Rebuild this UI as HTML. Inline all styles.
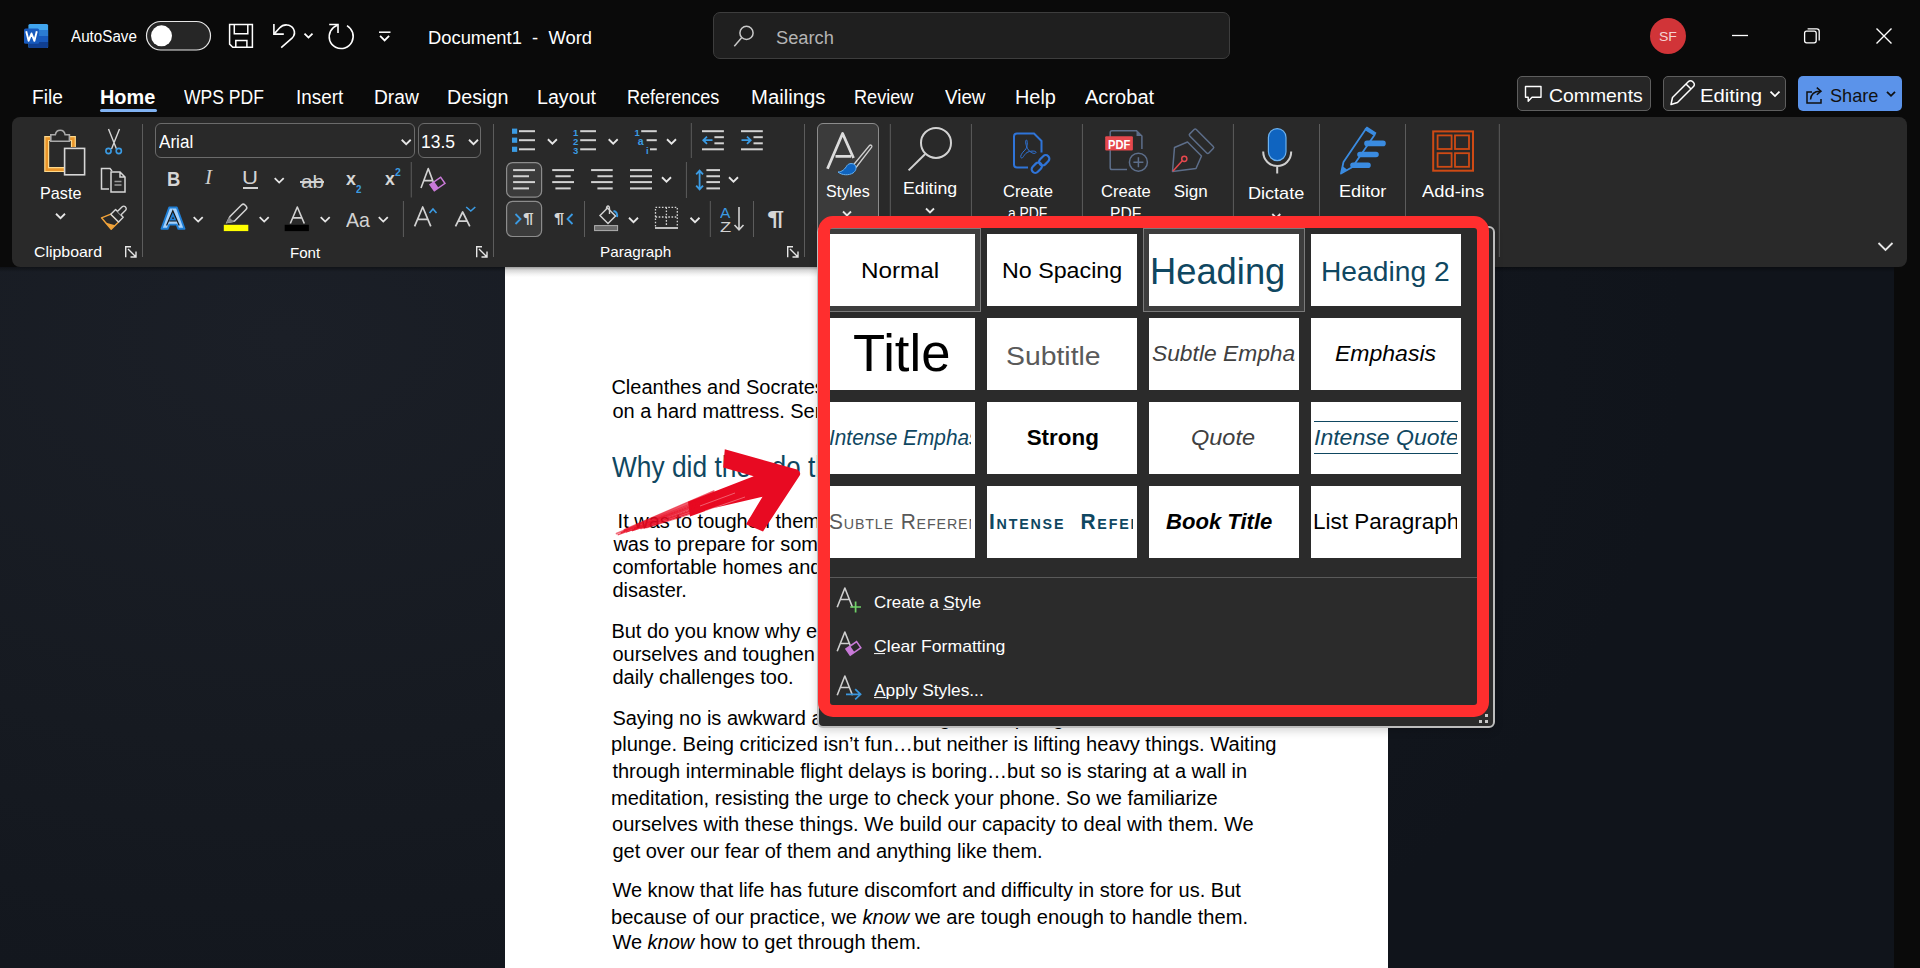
<!DOCTYPE html>
<html><head><meta charset="utf-8"><style>
html,body{margin:0;padding:0;width:1920px;height:968px;overflow:hidden;background:#0a0a0a;font-family:'Liberation Sans', sans-serif;}
#root{position:relative;width:1920px;height:968px;overflow:hidden;}
</style></head><body><div id="root">
<div style="position:absolute;left:0px;top:267px;width:1894px;height:701px;background:radial-gradient(ellipse 1400px 900px at 15% 10%, #1b1f27 0%, #161a21 45%, #10141b 100%);"></div>
<div style="position:absolute;left:12px;top:117px;width:1895px;height:150px;background:#292929;border-radius:8px;"></div>
<div style="position:absolute;left:0px;top:267px;width:1894px;height:5px;background:linear-gradient(rgba(0,0,0,.38),rgba(0,0,0,0));"></div>
<div style="position:absolute;left:505px;top:267px;width:883px;height:701px;background:#fff;"></div>
<div style="position:absolute;left:505px;top:267px;width:883px;height:10px;background:linear-gradient(#9c9c9c,#d6d6d6 30%,#f2f2f2 70%,#fff);"></div>
<div style="position:absolute;left:71.00px;top:28.90px;font:normal 400 16px/16px 'Liberation Sans', sans-serif;color:#fff;white-space:pre;transform:scaleX(0.9499);transform-origin:0 0;">AutoSave</div>
<div style="position:absolute;left:180.50px;top:28.90px;font:normal 400 16px/16px 'Liberation Sans', sans-serif;color:#fff;white-space:pre;transform:scaleX(0.9490);transform-origin:0 0;">Off</div>
<div style="position:absolute;left:427.68px;top:28.50px;font:normal 400 18px/18px 'Liberation Sans', sans-serif;color:#fff;white-space:pre;transform:scaleX(1.0201);transform-origin:0 0;">Document1  -  Word</div>
<div style="position:absolute;left:713px;top:12px;width:517px;height:47px;background:#1f1f1f;border:1px solid #3d3d3d;border-radius:7px;box-sizing:border-box;"></div>
<div style="position:absolute;left:775.50px;top:29.20px;font:normal 400 18px/18px 'Liberation Sans', sans-serif;color:#b4b4b4;white-space:pre;transform:scaleX(1.0157);transform-origin:0 0;">Search</div>
<div style="position:absolute;left:1650px;top:18px;width:36px;height:36px;background:#d13438;border-radius:50%;"></div>
<div style="position:absolute;left:1659.00px;top:30.45px;font:normal 400 13px/13px 'Liberation Sans', sans-serif;color:#f6d3d3;white-space:pre;transform:scaleX(1.0797);transform-origin:0 0;">SF</div>
<div style="position:absolute;left:32.02px;top:87.52px;font:normal 400 19.5px/19.5px 'Liberation Sans', sans-serif;color:#ffffff;white-space:pre;transform:scaleX(0.9805);transform-origin:0 0;">File</div>
<div style="position:absolute;left:99.58px;top:87.52px;font:normal 700 19.5px/19.5px 'Liberation Sans', sans-serif;color:#ffffff;white-space:pre;transform:scaleX(1.0200);transform-origin:0 0;">Home</div>
<div style="position:absolute;left:184.00px;top:87.52px;font:normal 400 19.5px/19.5px 'Liberation Sans', sans-serif;color:#ffffff;white-space:pre;transform:scaleX(0.8996);transform-origin:0 0;">WPS PDF</div>
<div style="position:absolute;left:295.63px;top:87.52px;font:normal 400 19.5px/19.5px 'Liberation Sans', sans-serif;color:#ffffff;white-space:pre;transform:scaleX(0.9679);transform-origin:0 0;">Insert</div>
<div style="position:absolute;left:373.72px;top:87.52px;font:normal 400 19.5px/19.5px 'Liberation Sans', sans-serif;color:#ffffff;white-space:pre;transform:scaleX(0.9841);transform-origin:0 0;">Draw</div>
<div style="position:absolute;left:446.99px;top:87.52px;font:normal 400 19.5px/19.5px 'Liberation Sans', sans-serif;color:#ffffff;white-space:pre;transform:scaleX(1.0110);transform-origin:0 0;">Design</div>
<div style="position:absolute;left:536.99px;top:87.52px;font:normal 400 19.5px/19.5px 'Liberation Sans', sans-serif;color:#ffffff;white-space:pre;transform:scaleX(1.0081);transform-origin:0 0;">Layout</div>
<div style="position:absolute;left:627.07px;top:87.52px;font:normal 400 19.5px/19.5px 'Liberation Sans', sans-serif;color:#ffffff;white-space:pre;transform:scaleX(0.9266);transform-origin:0 0;">References</div>
<div style="position:absolute;left:750.96px;top:87.52px;font:normal 400 19.5px/19.5px 'Liberation Sans', sans-serif;color:#ffffff;white-space:pre;transform:scaleX(1.0399);transform-origin:0 0;">Mailings</div>
<div style="position:absolute;left:854.37px;top:87.52px;font:normal 400 19.5px/19.5px 'Liberation Sans', sans-serif;color:#ffffff;white-space:pre;transform:scaleX(0.9302);transform-origin:0 0;">Review</div>
<div style="position:absolute;left:944.70px;top:87.52px;font:normal 400 19.5px/19.5px 'Liberation Sans', sans-serif;color:#ffffff;white-space:pre;transform:scaleX(0.9642);transform-origin:0 0;">View</div>
<div style="position:absolute;left:1014.98px;top:87.52px;font:normal 400 19.5px/19.5px 'Liberation Sans', sans-serif;color:#ffffff;white-space:pre;transform:scaleX(1.0189);transform-origin:0 0;">Help</div>
<div style="position:absolute;left:1085.00px;top:87.52px;font:normal 400 19.5px/19.5px 'Liberation Sans', sans-serif;color:#ffffff;white-space:pre;transform:scaleX(1.0283);transform-origin:0 0;">Acrobat</div>
<div style="position:absolute;left:100px;top:109px;width:57px;height:3px;background:#80b2f2;border-radius:2px;"></div>
<div style="position:absolute;left:1517px;top:76px;width:134px;height:35px;background:#262626;border:1px solid #5e5e5e;border-radius:5px;box-sizing:border-box;"></div>
<div style="position:absolute;left:1548.50px;top:85.60px;font:normal 400 19px/19px 'Liberation Sans', sans-serif;color:#fff;white-space:pre;transform:scaleX(1.0202);transform-origin:0 0;">Comments</div>
<div style="position:absolute;left:1663px;top:76px;width:123px;height:35px;background:#262626;border:1px solid #5e5e5e;border-radius:5px;box-sizing:border-box;"></div>
<div style="position:absolute;left:1699.53px;top:85.60px;font:normal 400 19px/19px 'Liberation Sans', sans-serif;color:#fff;white-space:pre;transform:scaleX(1.0685);transform-origin:0 0;">Editing</div>
<div style="position:absolute;left:1798px;top:76px;width:104px;height:35px;background:#5b93ea;border-radius:5px;"></div>
<div style="position:absolute;left:1829.80px;top:85.60px;font:normal 400 19px/19px 'Liberation Sans', sans-serif;color:#111;white-space:pre;transform:scaleX(0.9554);transform-origin:0 0;">Share</div>
<div style="position:absolute;left:817px;top:123px;width:62px;height:112px;background:#3b3b3b;border:1.2px solid #8c8c8c;border-radius:6px;box-sizing:border-box;"></div>
<div style="position:absolute;left:40.05px;top:184.65px;font:normal 400 17px/17px 'Liberation Sans', sans-serif;color:#fff;white-space:pre;transform:scaleX(0.9520);transform-origin:0 0;">Paste</div>
<div style="position:absolute;left:34.00px;top:244.35px;font:normal 400 15px/15px 'Liberation Sans', sans-serif;color:#fff;white-space:pre;transform:scaleX(1.0585);transform-origin:0 0;">Clipboard</div>
<div style="position:absolute;left:289.99px;top:244.65px;font:normal 400 15px/15px 'Liberation Sans', sans-serif;color:#fff;white-space:pre;transform:scaleX(1.0051);transform-origin:0 0;">Font</div>
<div style="position:absolute;left:600.38px;top:244.35px;font:normal 400 15px/15px 'Liberation Sans', sans-serif;color:#fff;white-space:pre;transform:scaleX(1.0174);transform-origin:0 0;">Paragraph</div>
<div style="position:absolute;left:825.75px;top:182.80px;font:normal 400 17px/17px 'Liberation Sans', sans-serif;color:#fff;white-space:pre;transform:scaleX(0.9445);transform-origin:0 0;">Styles</div>
<div style="position:absolute;left:902.96px;top:179.85px;font:normal 400 17px/17px 'Liberation Sans', sans-serif;color:#fff;white-space:pre;transform:scaleX(1.0411);transform-origin:0 0;">Editing</div>
<div style="position:absolute;left:1002.50px;top:182.80px;font:normal 400 17px/17px 'Liberation Sans', sans-serif;color:#fff;white-space:pre;transform:scaleX(0.9788);transform-origin:0 0;">Create</div>
<div style="position:absolute;left:1008.00px;top:205.05px;font:normal 400 17px/17px 'Liberation Sans', sans-serif;color:#fff;white-space:pre;transform:scaleX(0.8160);transform-origin:0 0;">a PDF</div>
<div style="position:absolute;left:1101.40px;top:183.05px;font:normal 400 17px/17px 'Liberation Sans', sans-serif;color:#fff;white-space:pre;transform:scaleX(0.9769);transform-origin:0 0;">Create</div>
<div style="position:absolute;left:1110.08px;top:205.05px;font:normal 400 17px/17px 'Liberation Sans', sans-serif;color:#fff;white-space:pre;transform:scaleX(0.9198);transform-origin:0 0;">PDF</div>
<div style="position:absolute;left:1173.75px;top:183.05px;font:normal 400 17px/17px 'Liberation Sans', sans-serif;color:#fff;white-space:pre;">Sign</div>
<div style="position:absolute;left:1248.44px;top:185.05px;font:normal 400 17px/17px 'Liberation Sans', sans-serif;color:#fff;white-space:pre;transform:scaleX(1.0631);transform-origin:0 0;">Dictate</div>
<div style="position:absolute;left:1338.93px;top:182.80px;font:normal 400 17px/17px 'Liberation Sans', sans-serif;color:#fff;white-space:pre;transform:scaleX(1.0652);transform-origin:0 0;">Editor</div>
<div style="position:absolute;left:1421.60px;top:182.80px;font:normal 400 17px/17px 'Liberation Sans', sans-serif;color:#fff;white-space:pre;transform:scaleX(1.0789);transform-origin:0 0;">Add-ins</div>
<div style="position:absolute;left:155px;top:123px;width:260px;height:35px;border:1px solid #6b6b6b;border-radius:6px;box-sizing:border-box;"></div>
<div style="position:absolute;left:158.75px;top:133.20px;font:normal 400 18px/18px 'Liberation Sans', sans-serif;color:#fff;white-space:pre;transform:scaleX(0.9497);transform-origin:0 0;">Arial</div>
<div style="position:absolute;left:418px;top:123px;width:63px;height:35px;border:1px solid #6b6b6b;border-radius:6px;box-sizing:border-box;"></div>
<div style="position:absolute;left:421.03px;top:133.20px;font:normal 400 18px/18px 'Liberation Sans', sans-serif;color:#fff;white-space:pre;transform:scaleX(0.9699);transform-origin:0 0;">13.5</div>
<div style="position:absolute;left:611.40px;top:377.10px;font:normal 400 20px/20px 'Liberation Sans', sans-serif;color:#000;white-space:pre;">Cleanthes and Socrates slept on the floor. Seneca slept</div>
<div style="position:absolute;left:612.40px;top:401.00px;font:normal 400 20px/20px 'Liberation Sans', sans-serif;color:#000;white-space:pre;">on a hard mattress. Seneca fasted.</div>
<div style="position:absolute;left:611.80px;top:452.62px;font:normal 400 28.8px/28.8px 'Liberation Sans', sans-serif;color:#0f4761;white-space:pre;transform:scaleX(0.9140);transform-origin:0 0;">Why did they do this?</div>
<div style="position:absolute;left:617.60px;top:511.00px;font:normal 400 20px/20px 'Liberation Sans', sans-serif;color:#000;white-space:pre;">It was to toughen them up. The point of these practices</div>
<div style="position:absolute;left:613.40px;top:534.00px;font:normal 400 20px/20px 'Liberation Sans', sans-serif;color:#000;white-space:pre;">was to prepare for some future misfortune, to leave</div>
<div style="position:absolute;left:612.40px;top:556.80px;font:normal 400 20px/20px 'Liberation Sans', sans-serif;color:#000;white-space:pre;">comfortable homes and prepare for some future</div>
<div style="position:absolute;left:612.40px;top:579.80px;font:normal 400 20px/20px 'Liberation Sans', sans-serif;color:#000;white-space:pre;">disaster.</div>
<div style="position:absolute;left:611.40px;top:621.20px;font:normal 400 20px/20px 'Liberation Sans', sans-serif;color:#000;white-space:pre;">But do you know why else? Because it builds up</div>
<div style="position:absolute;left:612.40px;top:643.80px;font:normal 400 20px/20px 'Liberation Sans', sans-serif;color:#000;white-space:pre;">ourselves and toughen up for the minor bumps of</div>
<div style="position:absolute;left:612.40px;top:666.70px;font:normal 400 20px/20px 'Liberation Sans', sans-serif;color:#000;white-space:pre;">daily challenges too.</div>
<div style="position:absolute;left:612.40px;top:708.20px;font:normal 400 20px/20px 'Liberation Sans', sans-serif;color:#000;white-space:pre;">Saying no is awkward and so is taking a cold plunge or a</div>
<div style="position:absolute;left:611.39px;top:734.40px;font:normal 400 20px/20px 'Liberation Sans', sans-serif;color:#000;white-space:pre;transform:scaleX(1.0056);transform-origin:0 0;">plunge. Being criticized isn’t fun…but neither is lifting heavy things. Waiting</div>
<div style="position:absolute;left:612.40px;top:760.70px;font:normal 400 20px/20px 'Liberation Sans', sans-serif;color:#000;white-space:pre;">through interminable flight delays is boring…but so is staring at a wall in</div>
<div style="position:absolute;left:611.40px;top:787.80px;font:normal 400 20px/20px 'Liberation Sans', sans-serif;color:#000;white-space:pre;transform:scaleX(1.0033);transform-origin:0 0;">meditation, resisting the urge to check your phone. So we familiarize</div>
<div style="position:absolute;left:612.40px;top:814.30px;font:normal 400 20px/20px 'Liberation Sans', sans-serif;color:#000;white-space:pre;transform:scaleX(1.0034);transform-origin:0 0;">ourselves with these things. We build our capacity to deal with them. We</div>
<div style="position:absolute;left:612.40px;top:840.90px;font:normal 400 20px/20px 'Liberation Sans', sans-serif;color:#000;white-space:pre;">get over our fear of them and anything like them.</div>
<div style="position:absolute;left:612.40px;top:879.50px;font:normal 400 20px/20px 'Liberation Sans', sans-serif;color:#000;white-space:pre;">We know that life has future discomfort and difficulty in store for us. But</div>
<div style="position:absolute;left:611.39px;top:906.50px;font:normal 400 20px/20px 'Liberation Sans', sans-serif;color:#000;white-space:pre;transform:scaleX(1.0051);transform-origin:0 0;">because of our practice, we <i>know</i> we are tough enough to handle them.</div>
<div style="position:absolute;left:612.40px;top:932.30px;font:normal 400 20px/20px 'Liberation Sans', sans-serif;color:#000;white-space:pre;">We <i>know</i> how to get through them.</div>
<svg style="position:absolute;left:0;top:0" width="1920" height="968" viewBox="0 0 1920 968" fill="none"><rect x="28.4" y="24" width="19.7" height="24" rx="1.5" fill="#41a5ee"/><rect x="28.4" y="30" width="19.7" height="6" fill="#2b7cd3"/><rect x="28.4" y="36" width="19.7" height="6" fill="#185abd"/><path d="M28.4 42 H48.1 V46.5 a1.5 1.5 0 0 1 -1.5 1.5 H29.9 a1.5 1.5 0 0 1 -1.5 -1.5z" fill="#103f91"/><rect x="24" y="28.4" width="15.1" height="15.4" rx="1.5" fill="#185abd"/><path d="M26.2 31.2 L28.6 40.8 L31.5 33.5 L34.4 40.8 L36.8 31.2" stroke="#fff" stroke-width="1.9" fill="none" stroke-linejoin="round"/><rect x="146.5" y="21.5" width="64" height="28.5" rx="14.25" fill="#262626" stroke="#e6e6e6" stroke-width="1.2"/><circle cx="161.5" cy="35.8" r="10.5" fill="#fff"/><path d="M229.6 24.6 H252.4 V47.3 H232.8 L229.6 44.1 Z" stroke="#fff" stroke-width="1.5" fill="none"/><path d="M234.3 24.6 V33.8 H247.8 V24.6" stroke="#fff" stroke-width="1.5" fill="none"/><path d="M235.8 47.3 V40.4 H246.9 V47.3" stroke="#fff" stroke-width="1.5" fill="none"/><path d="M273.9 24 V34.1 H283.8" stroke="#fff" stroke-width="1.6" fill="none"/><path d="M274.4 33.6 L279.5 28 C283.5 23.6 290.5 24 293.3 28.6 C295.2 31.8 294.5 35.6 292 38.2 L281.2 47.6" stroke="#fff" stroke-width="1.6" fill="none"/><path d="M304.5 33.6 L308.5 37.6 L312.5 33.6" stroke="#fff" stroke-width="1.8" fill="none"/><path d="M329.2 24.5 H338 V33" stroke="#fff" stroke-width="1.6" fill="none"/><path d="M337.4 25.2 C331.2 27.3 327.9 33.6 329.7 40.3 C331.6 46.6 338.5 49.9 344.9 47.9 C351.3 45.9 354.6 39 352.6 32.6 C351.6 29.6 349.6 27.2 347 25.6" stroke="#fff" stroke-width="1.6" fill="none"/><path d="M379 32.2 H390.5" stroke="#fff" stroke-width="1.5"/><path d="M380.1 35.95 L384.6 40.45 L389.1 35.95" stroke="#fff" stroke-width="1.8" fill="none"/><circle cx="746.5" cy="32.9" r="6.6" stroke="#c8c8c8" stroke-width="1.5" fill="none"/><path d="M741.6 37.8 L734.3 46.2" stroke="#c8c8c8" stroke-width="1.5"/><path d="M1732 35.5 H1748" stroke="#fff" stroke-width="1.3"/><rect x="1804.6" y="31.2" width="11.6" height="11.6" rx="2" stroke="#fff" stroke-width="1.3" fill="none"/><path d="M1807.6 28.8 H1816.8 a2.4 2.4 0 0 1 2.4 2.4 V40.4" stroke="#fff" stroke-width="1.3" fill="none"/><path d="M1876.5 28.5 L1891.5 43.5 M1891.5 28.5 L1876.5 43.5" stroke="#fff" stroke-width="1.4"/><path d="M1525.5 86.5 H1541 V97.3 H1532 L1528.2 101.2 V97.3 H1525.5 Z" stroke="#fff" stroke-width="1.4" fill="none" stroke-linejoin="round"/><path d="M1671 104.5 L1672.5 97.5 L1688.5 81.5 a2.8 2.8 0 0 1 4 0 L1693.5 82.5 a2.8 2.8 0 0 1 0 4 L1677.5 102.5 Z M1686 84 L1691 89" stroke="#fff" stroke-width="1.5" fill="none" stroke-linejoin="round"/><path d="M1770.5 91.55 L1775 96.05 L1779.5 91.55" stroke="#fff" stroke-width="1.8" fill="none"/><path d="M1812 92 H1807 V103 H1821 V99" stroke="#111" stroke-width="1.5" fill="none"/><path d="M1810.5 99.5 C1811 94 1814.5 91.2 1820 91.2 M1816.8 87.6 L1821 91.2 L1816.8 94.8" stroke="#111" stroke-width="1.5" fill="none"/><path d="M1887.0 91.8 L1891 95.8 L1895.0 91.8" stroke="#111" stroke-width="1.8" fill="none"/><path d="M52 138.6 H46.7 V169.6 H64" stroke="#ffd98a" stroke-width="5" fill="none"/><path d="M52 138.6 H46.7 V169.6 H64" stroke="#e9952a" stroke-width="2.6" fill="none"/><path d="M69 138.6 H73.4 V147" stroke="#ffd98a" stroke-width="5" fill="none"/><path d="M69 138.6 H73.4 V147" stroke="#e9952a" stroke-width="2.6" fill="none"/><path d="M50.8 141.2 V134.8 H55.3 C55.8 131.6 57.6 130.2 60.2 130.2 C62.8 130.2 64.6 131.6 65.1 134.8 H69.4 V141.2 Z" stroke="#a9a9a9" stroke-width="1.6" fill="#292929"/><rect x="64.6" y="148.4" width="20" height="26.4" stroke="#d6d6d6" stroke-width="1.6" fill="#292929"/><path d="M56.0 213.75 L60.5 218.25 L65.0 213.75" stroke="#e6e6e6" stroke-width="1.8" fill="none"/><path d="M108.5 129 L116.5 149 M119.5 129 L111.5 149" stroke="#d6d6d6" stroke-width="1.4"/><circle cx="108.5" cy="151" r="2.6" stroke="#3b9be3" stroke-width="1.6" fill="none"/><circle cx="118.8" cy="151" r="2.6" stroke="#3b9be3" stroke-width="1.6" fill="none"/><path d="M109 189 H101.5 V168.5 H110 L112 171" stroke="#d6d6d6" stroke-width="1.5" fill="none"/><path d="M111 172 H120 L125 177 V192 H111 Z M120 172 V177 H125" stroke="#d6d6d6" stroke-width="1.5" fill="none"/><path d="M114.5 181.5 H121.5 M114.5 185 H121.5" stroke="#9a9a9a" stroke-width="1.4"/><path d="M101.5 217.8 L110.8 214.2 L118.6 222 L111.2 229.2 Z" stroke="#f1a33a" stroke-width="1.4" fill="none" stroke-linejoin="round"/><path d="M105.2 222.6 L115.3 225.3 L111.2 229.2 Z" fill="#f1a33a"/><path d="M110.8 214.2 L115.6 209.6 L123.2 217.2 L118.6 222 Z" stroke="#d6d6d6" stroke-width="1.4" fill="#292929" stroke-linejoin="round"/><path d="M117.4 211.6 L122.2 206.8 a2.1 2.1 0 0 1 3 0 L125.6 207.2 a2.1 2.1 0 0 1 0 3 L120.8 215" stroke="#d6d6d6" stroke-width="1.4" fill="#292929"/><path d="M125.7 257.3 V246.7 H131" stroke="#e6e6e6" stroke-width="1.4" fill="none"/><path d="M128 249 L136 257 M136 251.5 V257 H130.5" stroke="#e6e6e6" stroke-width="1.4" fill="none"/><rect x="142.0" y="124" width="1" height="133" fill="#5c5c5c"/><path d="M401.7 139.75 L406.2 144.25 L410.7 139.75" stroke="#e6e6e6" stroke-width="1.8" fill="none"/><path d="M469.0 139.75 L473.5 144.25 L478.0 139.75" stroke="#e6e6e6" stroke-width="1.8" fill="none"/><path d="M274.7 178.05 L279.2 182.55 L283.7 178.05" stroke="#e6e6e6" stroke-width="1.8" fill="none"/><rect x="410.75" y="162" width="1" height="35.5" fill="#5c5c5c"/><path d="M421 188 L428.25 168.6 L435.5 188 M423.755 180.628 H432.745" stroke="#d2d2d2" stroke-width="1.6" fill="none" stroke-linejoin="round"/><g transform="translate(437.5 184) rotate(-35)"><rect x="-6.5" y="-3.75" width="13" height="7.5" stroke="#c97ad8" stroke-width="1.5" fill="#292929"/><rect x="-6.5" y="-3.75" width="5.2" height="7.5" fill="#c97ad8"/></g><path d="M193.7 217.05 L198.2 221.55 L202.7 217.05" stroke="#e6e6e6" stroke-width="1.8" fill="none"/><path d="M259.7 217.05 L264.2 221.55 L268.7 217.05" stroke="#e6e6e6" stroke-width="1.8" fill="none"/><path d="M320.7 217.05 L325.2 221.55 L329.7 217.05" stroke="#e6e6e6" stroke-width="1.8" fill="none"/><path d="M378.8 217.05 L383.3 221.55 L387.8 217.05" stroke="#e6e6e6" stroke-width="1.8" fill="none"/><rect x="402.9" y="201" width="1" height="36" fill="#5c5c5c"/><path fill-rule="evenodd" d="M161.5 228.8 L169.2 207.5 H176.8 L184.5 228.8 H178.4 L176.7 224.6 H169.3 L167.6 228.8 Z M170.7 220 H175.3 L173 213.2 Z" fill="#a6d2fb" stroke="#1f7fd6" stroke-width="1.9" stroke-linejoin="round"/><path d="M166.6 225.5 L172.8 210.8 L179.2 225.5 M169.2 221 H176.6" stroke="#151515" stroke-width="1.2" fill="none"/><rect x="223.8" y="224.8" width="24.5" height="6.3" fill="#ffff00"/><path d="M227 222.5 L230 216.5 L241.5 205 a2.5 2.5 0 0 1 3.5 0 L246 206 a2.5 2.5 0 0 1 0 3.5 L234.5 221 Z" stroke="#d2d2d2" stroke-width="1.5" fill="none"/><path d="M226 223.2 L229 217 L234 222 Z" fill="#8a8a8a"/><rect x="284.7" y="224.8" width="24.2" height="6.3" fill="#000"/><path d="M290.3 223.5 L297.3 207 L304.3 223.5 M292.68 217.89 H301.92" stroke="#d2d2d2" stroke-width="1.6" fill="none" stroke-linejoin="round"/><path d="M414.6 226.4 L422.70000000000005 207 L430.8 226.4 M417.516 219.416 H427.884" stroke="#d2d2d2" stroke-width="1.7" fill="none" stroke-linejoin="round"/><path d="M429.5 213 L433 209 L436.5 213" stroke="#3b9be3" stroke-width="1.6" fill="none"/><path d="M455.5 226.4 L462.65 212 L469.8 226.4 M458.074 221.216 H467.226" stroke="#d2d2d2" stroke-width="1.7" fill="none" stroke-linejoin="round"/><path d="M466.2 207 L470.8 211 L475.3 207" stroke="#3b9be3" stroke-width="1.6" fill="none"/><path d="M476.7 257.3 V246.7 H482" stroke="#e6e6e6" stroke-width="1.4" fill="none"/><path d="M479 249 L487 257 M487 251.5 V257 H481.5" stroke="#e6e6e6" stroke-width="1.4" fill="none"/><rect x="493.0" y="124" width="1" height="133" fill="#5c5c5c"/><rect x="512" y="128.6" width="5.2" height="5.2" fill="#3b9be3"/><path d="M519 131.2 L535 131.2" stroke="#d2d2d2" stroke-width="2"/><path d="M580.2 131.2 L596 131.2" stroke="#d2d2d2" stroke-width="2"/><rect x="512" y="137.6" width="5.2" height="5.2" fill="#3b9be3"/><path d="M519 140.2 L535 140.2" stroke="#d2d2d2" stroke-width="2"/><path d="M580.2 140.2 L596 140.2" stroke="#d2d2d2" stroke-width="2"/><rect x="512" y="146.70000000000002" width="5.2" height="5.2" fill="#3b9be3"/><path d="M519 149.3 L535 149.3" stroke="#d2d2d2" stroke-width="2"/><path d="M580.2 149.3 L596 149.3" stroke="#d2d2d2" stroke-width="2"/><path d="M547.9 139.25 L552.4 143.75 L556.9 139.25" stroke="#e6e6e6" stroke-width="1.8" fill="none"/><path d="M608.7 139.25 L613.2 143.75 L617.7 139.25" stroke="#e6e6e6" stroke-width="1.8" fill="none"/><path d="M667.0 139.25 L671.5 143.75 L676.0 139.25" stroke="#e6e6e6" stroke-width="1.8" fill="none"/><path d="M641.2 131.2 L656.8 131.2" stroke="#d2d2d2" stroke-width="2"/><path d="M646.6 140.2 L656.8 140.2" stroke="#d2d2d2" stroke-width="2"/><path d="M650 149.3 L656.8 149.3" stroke="#d2d2d2" stroke-width="2"/><rect x="690.8" y="123" width="1" height="35" fill="#5c5c5c"/><path d="M702 131.2 L723.9 131.2" stroke="#d2d2d2" stroke-width="2"/><path d="M714.4 137.2 L723.9 137.2" stroke="#d2d2d2" stroke-width="2"/><path d="M714.4 143.3 L723.9 143.3" stroke="#d2d2d2" stroke-width="2"/><path d="M702 149.3 L723.9 149.3" stroke="#d2d2d2" stroke-width="2"/><path d="M712.5 140.2 H703.5 M707 136.6 L703.3 140.2 L707 143.8" stroke="#3b9be3" stroke-width="1.8" fill="none"/><path d="M741 131.2 L762.8 131.2" stroke="#d2d2d2" stroke-width="2"/><path d="M753.5 137.2 L762.8 137.2" stroke="#d2d2d2" stroke-width="2"/><path d="M753.5 143.3 L762.8 143.3" stroke="#d2d2d2" stroke-width="2"/><path d="M741 149.3 L762.8 149.3" stroke="#d2d2d2" stroke-width="2"/><path d="M741.5 140.2 H750.5 M747 136.6 L750.7 140.2 L747 143.8" stroke="#3b9be3" stroke-width="1.8" fill="none"/><rect x="506.6" y="162.6" width="35" height="34.6" rx="6" fill="#3b3b3b" stroke="#8c8c8c" stroke-width="1.2"/><rect x="506.6" y="201.3" width="35" height="35.2" rx="6" fill="#3b3b3b" stroke="#8c8c8c" stroke-width="1.2"/><path d="M513.1 170.1 L535 170.1" stroke="#d2d2d2" stroke-width="2"/><path d="M513.1 176.25 L529 176.25" stroke="#d2d2d2" stroke-width="2"/><path d="M513.1 182.1 L535 182.1" stroke="#d2d2d2" stroke-width="2"/><path d="M513.1 188.4 L529 188.4" stroke="#d2d2d2" stroke-width="2"/><path d="M552.2 170.1 L574 170.1" stroke="#d2d2d2" stroke-width="2"/><path d="M555.4 176.25 L570.7 176.25" stroke="#d2d2d2" stroke-width="2"/><path d="M552.2 182.1 L574 182.1" stroke="#d2d2d2" stroke-width="2"/><path d="M555.4 188.4 L570.7 188.4" stroke="#d2d2d2" stroke-width="2"/><path d="M591.1 170.1 L612.7 170.1" stroke="#d2d2d2" stroke-width="2"/><path d="M597.4 176.25 L612.7 176.25" stroke="#d2d2d2" stroke-width="2"/><path d="M591.1 182.1 L612.7 182.1" stroke="#d2d2d2" stroke-width="2"/><path d="M597.4 188.4 L612.7 188.4" stroke="#d2d2d2" stroke-width="2"/><path d="M630 170.1 L652 170.1" stroke="#d2d2d2" stroke-width="2"/><path d="M630 176.25 L652 176.25" stroke="#d2d2d2" stroke-width="2"/><path d="M630 182.1 L652 182.1" stroke="#d2d2d2" stroke-width="2"/><path d="M630 188.4 L652 188.4" stroke="#d2d2d2" stroke-width="2"/><path d="M662.0 177.25 L666.5 181.75 L671.0 177.25" stroke="#e6e6e6" stroke-width="1.8" fill="none"/><rect x="685.9" y="162" width="1" height="36" fill="#5c5c5c"/><path d="M699.6 171 V189 M696.2 174.4 L699.6 170.6 L703 174.4 M696.2 185.6 L699.6 189.4 L703 185.6" stroke="#3b9be3" stroke-width="1.8" fill="none"/><path d="M706.4 170.1 L720 170.1" stroke="#d2d2d2" stroke-width="2"/><path d="M706.4 176.25 L720 176.25" stroke="#d2d2d2" stroke-width="2"/><path d="M706.4 182.1 L720 182.1" stroke="#d2d2d2" stroke-width="2"/><path d="M706.4 188.4 L720 188.4" stroke="#d2d2d2" stroke-width="2"/><path d="M729.0 177.25 L733.5 181.75 L738.0 177.25" stroke="#e6e6e6" stroke-width="1.8" fill="none"/><path d="M515.5 214 L520.5 219 L515.5 224" stroke="#3b9be3" stroke-width="1.8" fill="none"/><path d="M572.5 214 L567.5 219 L572.5 224" stroke="#3b9be3" stroke-width="1.8" fill="none"/><rect x="584.0" y="201" width="1" height="36" fill="#5c5c5c"/><path d="M600 215.5 L607.5 208 L615.5 216 L608 223.5 Z" stroke="#d2d2d2" stroke-width="1.5" fill="none"/><path d="M606.5 209 C606.5 205 609.5 205 609.5 209 V214" stroke="#d2d2d2" stroke-width="1.4" fill="none"/><path d="M613.5 211 C616.5 211.5 617.5 214 617 217" stroke="#3b9be3" stroke-width="2" fill="none"/><rect x="594.6" y="225.6" width="23" height="5" fill="#6a6a6a" stroke="#b0b0b0" stroke-width="1"/><path d="M629.0 217.75 L633.5 222.25 L638.0 217.75" stroke="#e6e6e6" stroke-width="1.8" fill="none"/><path d="M655.5 226.5 V207.3 H677.3 V226.5 M666.4 207.3 V226.5 M655.5 217 H677.3" stroke="#d2d2d2" stroke-width="1.3" stroke-dasharray="1.6 1.6" fill="none"/><path d="M655 228 H678" stroke="#e6e6e6" stroke-width="1.6"/><path d="M690.5 217.75 L695 222.25 L699.5 217.75" stroke="#e6e6e6" stroke-width="1.8" fill="none"/><rect x="709.8" y="201" width="1" height="36" fill="#5c5c5c"/><path d="M739 207 V229.5 M734.5 225 L739 229.8 L743.5 225" stroke="#d2d2d2" stroke-width="1.6" fill="none"/><rect x="753.0" y="201" width="1" height="36" fill="#5c5c5c"/><path d="M787.7 257.3 V246.7 H793" stroke="#e6e6e6" stroke-width="1.4" fill="none"/><path d="M790 249 L798 257 M798 251.5 V257 H792.5" stroke="#e6e6e6" stroke-width="1.4" fill="none"/><rect x="804.0" y="124" width="1" height="133" fill="#5c5c5c"/><path d="M827.5 168.8 L842.6 133.5 L853.5 158 M835.5 156.4 H851" stroke="#dcdcdc" stroke-width="2.8" fill="none" stroke-linejoin="round"/><path d="M853 165.5 L869.5 145.5 a1.4 1.4 0 0 1 2.2 1.7 L856 167.5" stroke="#cfcfcf" stroke-width="1.3" fill="#3b3b3b"/><path d="M838 172 C842 172 845 169 847 165.5 C849 163 853 163 855 165 C857 167.5 856 171 853 173 C849 175.5 842 175.5 838 172 Z" fill="#0f64c0" stroke="#66b0f0" stroke-width="1"/><path d="M843.0 211.5 L847 215.5 L851.0 211.5" stroke="#e6e6e6" stroke-width="1.8" fill="none"/><rect x="889.8" y="124" width="1" height="133" fill="#5c5c5c"/><circle cx="936" cy="142.9" r="15" stroke="#d2d2d2" stroke-width="2" fill="none"/><path d="M925.2 154 L908.6 170.4" stroke="#d2d2d2" stroke-width="2"/><path d="M926.0 208.5 L930 212.5 L934.0 208.5" stroke="#e6e6e6" stroke-width="1.8" fill="none"/><rect x="970.9" y="124" width="1" height="133" fill="#5c5c5c"/><path d="M1028 167.4 H1017 a3 3 0 0 1 -3 -3 V136.6 a3 3 0 0 1 3 -3 H1034 L1041.5 141 V152.5" stroke="#2f74d8" stroke-width="2" fill="none" stroke-dasharray="0"/><path d="M1022 158 C1019 158 1021.5 153 1025 150 C1028 147 1027.5 140.5 1026.5 140 C1025 139.5 1025.5 146 1028.5 150 C1031 153 1035 154.5 1036 152.5 C1036.5 151 1032 150.5 1028 152 C1025 153 1023 158 1022 158 Z" stroke="#2f74d8" stroke-width="1" fill="none"/><g transform="translate(1040.5 164) rotate(-45)"><rect x="-11" y="-3.6" width="11.5" height="7.2" rx="3.6" stroke="#2f74d8" stroke-width="2.2" fill="none"/><rect x="-0.5" y="-3.6" width="11.5" height="7.2" rx="3.6" stroke="#2f74d8" stroke-width="2.2" fill="none"/></g><rect x="1081.9" y="124" width="1" height="133" fill="#5c5c5c"/><path d="M1127 169.5 H1112 a1.8 1.8 0 0 1 -1.8 -1.8 V132.5 a1.8 1.8 0 0 1 1.8 -1.8 H1136.5 L1141.9 136 V149" stroke="#5d6e8a" stroke-width="1.5" fill="none"/><path d="M1136.5 131 L1141.9 136 H1136.5 Z" fill="#5d6e8a"/><rect x="1105.2" y="136.2" width="27.7" height="14.2" rx="1" fill="#e5484d"/><circle cx="1138.4" cy="162.2" r="9" stroke="#5d6e8a" stroke-width="1.5" fill="#292929"/><path d="M1133.4 162.2 H1143.4 M1138.4 157.2 V167.2" stroke="#5d6e8a" stroke-width="1.5"/><path d="M1172.5 171.5 L1174.5 147.5 L1187.5 142 L1201.5 156 L1196 168.5 Z" stroke="#5d6e8a" stroke-width="1.5" fill="none" stroke-linejoin="round"/><g transform="translate(1201.5 141.2) rotate(45)"><rect x="-13.5" y="-4.6" width="27" height="9.2" rx="1.5" stroke="#5d6e8a" stroke-width="1.5" fill="none"/></g><path d="M1172.8 171.2 L1182.5 160.5" stroke="#e5484d" stroke-width="1.5"/><circle cx="1184.3" cy="158.8" r="2.6" stroke="#e5484d" stroke-width="1.5" fill="none"/><rect x="1232.9" y="124" width="1" height="133" fill="#5c5c5c"/><rect x="1268.4" y="128.6" width="17.6" height="32" rx="8.8" fill="#0f64c0" stroke="#6cb2f0" stroke-width="1.2"/><path d="M1263.2 151.5 C1263.2 160 1269.5 166 1277.2 166 C1284.9 166 1291.2 160 1291.2 151.5 M1277.2 166 V173.5" stroke="#cfcfcf" stroke-width="2" fill="none"/><path d="M1272.3 214.0 L1276.3 218.0 L1280.3 214.0" stroke="#e6e6e6" stroke-width="1.8" fill="none"/><rect x="1319.0" y="124" width="1" height="133" fill="#5c5c5c"/><path d="M1341 173.5 L1343.5 162 L1365.5 129.5 L1374.5 135 L1352.5 167 Z" stroke="#3a8be0" stroke-width="1.8" fill="none" stroke-linejoin="round"/><path d="M1365 129.5 L1367 127.5 L1375.5 133 L1374.5 135" fill="#3a8be0" stroke="#3a8be0" stroke-width="1.5"/><path d="M1341 173.5 L1347 169.5 L1343 166.5 Z" fill="#3a8be0"/><path d="M1367 143.4 H1383 M1360 154.5 H1376 M1353 165.3 H1368" stroke="#3a8be0" stroke-width="5.6" stroke-linecap="round"/><rect x="1405.0" y="124" width="1" height="133" fill="#5c5c5c"/><rect x="1433.2" y="131.4" width="39.8" height="39.3" stroke="#cf4a14" stroke-width="2" fill="none"/><rect x="1437.6" y="135.4" width="14" height="13.6" stroke="#cf4a14" stroke-width="1.8" fill="none"/><rect x="1455" y="135.4" width="14" height="13.6" stroke="#cf4a14" stroke-width="1.8" fill="none"/><rect x="1437.6" y="153.2" width="14" height="13.6" stroke="#cf4a14" stroke-width="1.8" fill="none"/><rect x="1455" y="153.2" width="14" height="13.6" stroke="#cf4a14" stroke-width="1.8" fill="none"/><rect x="1498.8" y="124" width="1" height="133" fill="#5c5c5c"/><path d="M1878.5 243.0 L1885.5 250.0 L1892.5 243.0" stroke="#e6e6e6" stroke-width="1.8" fill="none"/></svg>
<div style="position:absolute;left:166.60px;top:168.88px;font:normal 700 20.5px/20.5px 'Liberation Sans', sans-serif;color:#d6d6d6;white-space:pre;transform:scaleX(0.9000);transform-origin:0 0;">B</div>
<div style="position:absolute;left:205px;top:167px;font:italic 400 21px/21px 'Liberation Serif', serif;color:#cfcfcf;">I</div>
<div style="position:absolute;left:242.13px;top:168.35px;font:normal 400 19px/19px 'Liberation Sans', sans-serif;color:#d2d2d2;white-space:pre;transform:scaleX(1.1667);transform-origin:0 0;">U</div>
<div style="position:absolute;left:243px;top:187.3px;width:14.5px;height:1.7px;background:#d2d2d2;"></div>
<div style="position:absolute;left:300.50px;top:171.85px;font:normal 400 19px/19px 'Liberation Sans', sans-serif;color:#d2d2d2;white-space:pre;transform:scaleX(1.0940);transform-origin:0 0;">ab</div>
<div style="position:absolute;left:299.5px;top:181.2px;width:24.5px;height:1.5px;background:#d2d2d2;"></div>
<div style="position:absolute;left:345.60px;top:171.43px;font:normal 700 17.5px/17.5px 'Liberation Sans', sans-serif;color:#d6d6d6;white-space:pre;transform:scaleX(1.0200);transform-origin:0 0;">x</div>
<div style="position:absolute;left:356.40px;top:183.57px;font:normal 700 10.5px/10.5px 'Liberation Sans', sans-serif;color:#3b9be3;white-space:pre;transform:scaleX(0.9333);transform-origin:0 0;">2</div>
<div style="position:absolute;left:384.70px;top:171.43px;font:normal 700 17.5px/17.5px 'Liberation Sans', sans-serif;color:#d6d6d6;white-space:pre;transform:scaleX(1.0100);transform-origin:0 0;">x</div>
<div style="position:absolute;left:395.00px;top:167.17px;font:normal 700 10.5px/10.5px 'Liberation Sans', sans-serif;color:#3b9be3;white-space:pre;">2</div>
<div style="position:absolute;left:346.40px;top:209.05px;font:normal 400 21px/21px 'Liberation Sans', sans-serif;color:#d2d2d2;white-space:pre;transform:scaleX(0.9305);transform-origin:0 0;">Aa</div>
<div style="position:absolute;left:573.00px;top:128.02px;font:normal 700 9.5px/9.5px 'Liberation Sans', sans-serif;color:#3b9be3;white-space:pre;">1</div>
<div style="position:absolute;left:573.00px;top:137.03px;font:normal 700 9.5px/9.5px 'Liberation Sans', sans-serif;color:#3b9be3;white-space:pre;">2</div>
<div style="position:absolute;left:573.00px;top:146.03px;font:normal 700 9.5px/9.5px 'Liberation Sans', sans-serif;color:#3b9be3;white-space:pre;">3</div>
<div style="position:absolute;left:634.50px;top:128.02px;font:normal 700 9.5px/9.5px 'Liberation Sans', sans-serif;color:#3b9be3;white-space:pre;">1</div>
<div style="position:absolute;left:637.80px;top:136.17px;font:normal 700 10.5px/10.5px 'Liberation Sans', sans-serif;color:#3b9be3;white-space:pre;">a</div>
<div style="position:absolute;left:646.00px;top:146.03px;font:normal 700 9.5px/9.5px 'Liberation Sans', sans-serif;color:#3b9be3;white-space:pre;">i</div>
<div style="position:absolute;left:522.70px;top:210.35px;font:normal 700 15px/15px 'Liberation Sans', sans-serif;color:#d6d6d6;white-space:pre;transform:scaleX(1.2875);transform-origin:0 0;">¶</div>
<div style="position:absolute;left:553.60px;top:210.35px;font:normal 700 15px/15px 'Liberation Sans', sans-serif;color:#d6d6d6;white-space:pre;transform:scaleX(1.2375);transform-origin:0 0;">¶</div>
<div style="position:absolute;left:719.50px;top:206.10px;font:normal 400 14px/14px 'Liberation Sans', sans-serif;color:#3b9be3;white-space:pre;transform:scaleX(1.1100);transform-origin:0 0;">A</div>
<div style="position:absolute;left:720.00px;top:218.55px;font:normal 400 15px/15px 'Liberation Sans', sans-serif;color:#d2d2d2;white-space:pre;transform:scaleX(1.2222);transform-origin:0 0;">Z</div>
<div style="position:absolute;left:766.70px;top:207.15px;font:normal 700 21px/21px 'Liberation Sans', sans-serif;color:#d6d6d6;white-space:pre;transform:scaleX(1.4818);transform-origin:0 0;">¶</div>
<div style="position:absolute;left:1108.00px;top:138.80px;font:normal 700 12px/12px 'Liberation Sans', sans-serif;color:#fff;white-space:pre;transform:scaleX(0.9294);transform-origin:0 0;">PDF</div>
<div style="position:absolute;left:817px;top:226px;width:678px;height:502px;background:#2b2b2b;border:2px solid #bdbdbd;border-radius:6px;box-sizing:border-box;box-shadow:0 3px 8px rgba(0,0,0,.16);"></div>
<div style="position:absolute;left:1143px;top:228px;width:162px;height:84px;background:#3d3d3d;border:1px solid #7a7a7a;box-sizing:border-box;"></div>
<div style="position:absolute;left:819px;top:228px;width:162px;height:84px;background:#3d3d3d;border:1px solid #7a7a7a;box-sizing:border-box;"></div>
<div style="position:absolute;left:825px;top:234px;width:150px;height:72px;background:#fff;"></div>
<div style="position:absolute;left:987px;top:234px;width:150px;height:72px;background:#fff;"></div>
<div style="position:absolute;left:1149px;top:234px;width:150px;height:72px;background:#fff;"></div>
<div style="position:absolute;left:1311px;top:234px;width:150px;height:72px;background:#fff;"></div>
<div style="position:absolute;left:825px;top:318px;width:150px;height:72px;background:#fff;"></div>
<div style="position:absolute;left:987px;top:318px;width:150px;height:72px;background:#fff;"></div>
<div style="position:absolute;left:1149px;top:318px;width:150px;height:72px;background:#fff;"></div>
<div style="position:absolute;left:1311px;top:318px;width:150px;height:72px;background:#fff;"></div>
<div style="position:absolute;left:825px;top:402px;width:150px;height:72px;background:#fff;"></div>
<div style="position:absolute;left:987px;top:402px;width:150px;height:72px;background:#fff;"></div>
<div style="position:absolute;left:1149px;top:402px;width:150px;height:72px;background:#fff;"></div>
<div style="position:absolute;left:1311px;top:402px;width:150px;height:72px;background:#fff;"></div>
<div style="position:absolute;left:825px;top:486px;width:150px;height:72px;background:#fff;"></div>
<div style="position:absolute;left:987px;top:486px;width:150px;height:72px;background:#fff;"></div>
<div style="position:absolute;left:1149px;top:486px;width:150px;height:72px;background:#fff;"></div>
<div style="position:absolute;left:1311px;top:486px;width:150px;height:72px;background:#fff;"></div>
<div style="position:absolute;left:830px;top:577px;width:647px;height:1px;background:#5a5a5a;"></div>
<div style="position:absolute;left:874.20px;top:593.95px;font:normal 400 17px/17px 'Liberation Sans', sans-serif;color:#fff;white-space:pre;transform:scaleX(0.9938);transform-origin:0 0;">Create a Style</div>
<div style="position:absolute;left:874.20px;top:638.45px;font:normal 400 17px/17px 'Liberation Sans', sans-serif;color:#fff;white-space:pre;transform:scaleX(1.0369);transform-origin:0 0;">Clear Formatting</div>
<div style="position:absolute;left:874.20px;top:682.15px;font:normal 400 17px/17px 'Liberation Sans', sans-serif;color:#fff;white-space:pre;transform:scaleX(1.0188);transform-origin:0 0;">Apply Styles...</div>
<div style="position:absolute;left:825px;top:234px;width:146px;height:72px;overflow:hidden"><div style="position:absolute;left:35.90px;top:26.30px;font:normal 400 22px/22px 'Liberation Sans', sans-serif;color:#000;white-space:pre;transform:scaleX(1.1013);transform-origin:0 0;">Normal</div></div>
<div style="position:absolute;left:987px;top:234px;width:146px;height:72px;overflow:hidden"><div style="position:absolute;left:14.94px;top:26.30px;font:normal 400 22px/22px 'Liberation Sans', sans-serif;color:#000;white-space:pre;transform:scaleX(1.0565);transform-origin:0 0;">No Spacing</div></div>
<div style="position:absolute;left:1149px;top:234px;width:146px;height:72px;overflow:hidden"><div style="position:absolute;left:1.32px;top:19.97px;font:normal 400 36.5px/36.5px 'Liberation Sans', sans-serif;color:#0f4761;white-space:pre;transform:scaleX(0.9949);transform-origin:0 0;">Heading</div></div>
<div style="position:absolute;left:1311px;top:234px;width:146px;height:72px;overflow:hidden"><div style="position:absolute;left:9.99px;top:23.70px;font:normal 400 28px/28px 'Liberation Sans', sans-serif;color:#0f4761;white-space:pre;transform:scaleX(1.0073);transform-origin:0 0;">Heading 2</div></div>
<div style="position:absolute;left:825px;top:318px;width:146px;height:72px;overflow:hidden"><div style="position:absolute;left:27.67px;top:10.15px;font:normal 400 51px/51px 'Liberation Sans', sans-serif;color:#000;white-space:pre;transform:scaleX(1.0316);transform-origin:0 0;">Title</div></div>
<div style="position:absolute;left:987px;top:318px;width:146px;height:72px;overflow:hidden"><div style="position:absolute;left:18.61px;top:24.90px;font:normal 400 26px/26px 'Liberation Sans', sans-serif;color:#5a5a5a;white-space:pre;transform:scaleX(1.0908);transform-origin:0 0;">Subtitle</div></div>
<div style="position:absolute;left:1149px;top:318px;width:146px;height:72px;overflow:hidden"><div style="position:absolute;left:3.00px;top:25.16px;font:italic 400 22.4px/22.4px 'Liberation Sans', sans-serif;color:#404040;white-space:pre;transform:scaleX(1.0178);transform-origin:0 0;">Subtle Empha</div></div>
<div style="position:absolute;left:1149px;top:318px;width:146px;height:72px;overflow:hidden"><div style="position:absolute;left:145.70px;top:25.16px;font:italic 400 22.4px/22.4px 'Liberation Sans', sans-serif;color:#404040;white-space:pre;">sis</div></div>
<div style="position:absolute;left:1311px;top:318px;width:146px;height:72px;overflow:hidden"><div style="position:absolute;left:24.00px;top:25.16px;font:italic 400 22.4px/22.4px 'Liberation Sans', sans-serif;color:#000;white-space:pre;transform:scaleX(1.0274);transform-origin:0 0;">Emphasis</div></div>
<div style="position:absolute;left:825px;top:402px;width:146px;height:72px;overflow:hidden"><div style="position:absolute;left:4.00px;top:25.16px;font:italic 400 22.4px/22.4px 'Liberation Sans', sans-serif;color:#0f4761;white-space:pre;transform:scaleX(0.9300);transform-origin:0 0;">Intense Emphasis</div></div>
<div style="position:absolute;left:987px;top:402px;width:146px;height:72px;overflow:hidden"><div style="position:absolute;left:39.70px;top:25.16px;font:normal 700 22.4px/22.4px 'Liberation Sans', sans-serif;color:#000;white-space:pre;">Strong</div></div>
<div style="position:absolute;left:1149px;top:402px;width:146px;height:72px;overflow:hidden"><div style="position:absolute;left:42.45px;top:25.16px;font:italic 400 22.4px/22.4px 'Liberation Sans', sans-serif;color:#404040;white-space:pre;transform:scaleX(1.0497);transform-origin:0 0;">Quote</div></div>
<div style="position:absolute;left:1311px;top:402px;width:146px;height:72px;overflow:hidden"><div style="position:absolute;left:2.70px;top:25.16px;font:italic 400 22.4px/22.4px 'Liberation Sans', sans-serif;color:#0f4761;white-space:pre;transform:scaleX(1.0292);transform-origin:0 0;">Intense Quote</div></div>
<div style="position:absolute;left:1314px;top:421px;width:144px;height:1px;background:#0f4761;"></div>
<div style="position:absolute;left:1314px;top:453px;width:144px;height:1px;background:#0f4761;"></div>
<div style="position:absolute;left:825px;top:486px;width:146px;height:72px;overflow:hidden"><div style="position:absolute;left:3.75px;top:25.10px;font:normal 400 22px/22px 'Liberation Sans', sans-serif;color:#5a5a5a;white-space:pre;transform:scaleX(0.9500);transform-origin:0 0;font-variant:small-caps;letter-spacing:0.9px;">Subtle Reference</div></div>
<div style="position:absolute;left:987px;top:486px;width:146px;height:72px;overflow:hidden"><div style="position:absolute;left:2.35px;top:25.10px;font:normal 700 22px/22px 'Liberation Sans', sans-serif;color:#0f4761;white-space:pre;transform:scaleX(0.9500);transform-origin:0 0;font-variant:small-caps;letter-spacing:1.9px;">Intense  Reference</div></div>
<div style="position:absolute;left:1149px;top:486px;width:146px;height:72px;overflow:hidden"><div style="position:absolute;left:16.80px;top:24.76px;font:italic 700 22.4px/22.4px 'Liberation Sans', sans-serif;color:#000;white-space:pre;transform:scaleX(0.9863);transform-origin:0 0;">Book Title</div></div>
<div style="position:absolute;left:1311px;top:486px;width:146px;height:72px;overflow:hidden"><div style="position:absolute;left:2.20px;top:24.76px;font:normal 400 22.4px/22.4px 'Liberation Sans', sans-serif;color:#000;white-space:pre;transform:scaleX(1.0044);transform-origin:0 0;">List Paragraph</div></div>
<div style="position:absolute;left:818px;top:216px;width:671px;height:501px;border:12px solid #ff2e2e;border-radius:15px;box-sizing:border-box;"></div>
<svg style="position:absolute;left:0;top:0" width="1920" height="968" viewBox="0 0 1920 968" fill="none"><path d="M837.2 607.2 L844.85 588 L852.5 607.2 M840.2600000000001 599.52 H849.4399999999999" stroke="#cfcfcf" stroke-width="1.6" fill="none" stroke-linejoin="round"/><path d="M850.2 607 H861 M855.6 601.6 V612.4" stroke="#6fd067" stroke-width="1.7"/><path d="M837.2 651.2 L844.85 632 L852.5 651.2 M840.2600000000001 643.52 H849.4399999999999" stroke="#cfcfcf" stroke-width="1.6" fill="none" stroke-linejoin="round"/><g transform="translate(853.4 648.4) rotate(-35)"><rect x="-6.5" y="-3.75" width="13" height="7.5" stroke="#c97ad8" stroke-width="1.5" fill="#292929"/><rect x="-6.5" y="-3.75" width="5.2" height="7.5" fill="#c97ad8"/></g><path d="M837.2 695.2 L844.85 676 L852.5 695.2 M840.2600000000001 687.52 H849.4399999999999" stroke="#cfcfcf" stroke-width="1.6" fill="none" stroke-linejoin="round"/><path d="M846 694.3 H860.5 M855.2 689.2 L860.6 694.3 L855.2 699.4" stroke="#3a96dd" stroke-width="1.7" fill="none"/><path d="M943 609.3 H953.5 M874 653.6 H885 M874 697.6 H886" stroke="#fff" stroke-width="1"/><rect x="1485.0" y="714.0" width="3" height="3" fill="#c8c8c8"/><rect x="1479.0" y="720.0" width="3" height="3" fill="#c8c8c8"/><rect x="1485.0" y="720.0" width="3" height="3" fill="#c8c8c8"/></svg>
<svg style="position:absolute;left:0;top:0" width="1920" height="968" viewBox="0 0 1920 968"><path d="M724.8 449.3 L797 469.5 Q801.5 471.5 799.7 475.5 L763 531.4 L746 524.2 L762.5 496.7 L713 508.3 L690 516.5 L688 501.7 L753.7 476.2 L723.2 467.4 Z" fill="#e80a22"/><path d="M714 490.9 L624.3 529.6" stroke="#e80a22" stroke-width="1.34" stroke-opacity="0.65" stroke-linecap="round"/><path d="M714 492.2 L637.1 524.5" stroke="#e80a22" stroke-width="1.40" stroke-opacity="0.53" stroke-linecap="round"/><path d="M714 493.6 L616.5 533.6" stroke="#e80a22" stroke-width="1.57" stroke-opacity="0.60" stroke-linecap="round"/><path d="M714 494.9 L624.2 530.8" stroke="#e80a22" stroke-width="1.70" stroke-opacity="0.69" stroke-linecap="round"/><path d="M714 496.2 L645.3 523.1" stroke="#e80a22" stroke-width="1.28" stroke-opacity="0.76" stroke-linecap="round"/><path d="M714 497.6 L621.3 532.7" stroke="#e80a22" stroke-width="1.41" stroke-opacity="0.85" stroke-linecap="round"/><path d="M714 498.9 L634.3 528.4" stroke="#e80a22" stroke-width="1.49" stroke-opacity="0.77" stroke-linecap="round"/><path d="M714 500.2 L618.2 534.6" stroke="#e80a22" stroke-width="1.51" stroke-opacity="0.74" stroke-linecap="round"/><path d="M714 501.6 L626.5 532.1" stroke="#e80a22" stroke-width="0.92" stroke-opacity="0.85" stroke-linecap="round"/><path d="M714 502.9 L632.5 530.5" stroke="#e80a22" stroke-width="1.48" stroke-opacity="0.85" stroke-linecap="round"/><path d="M714 504.2 L641.0 528.4" stroke="#e80a22" stroke-width="1.64" stroke-opacity="0.66" stroke-linecap="round"/><path d="M714 505.6 L644.0 528.1" stroke="#e80a22" stroke-width="1.26" stroke-opacity="0.87" stroke-linecap="round"/><path d="M714 506.9 L646.8 527.9" stroke="#e80a22" stroke-width="0.98" stroke-opacity="0.55" stroke-linecap="round"/><path d="M735 493 L700 506 M745 497 L705 511" stroke="#fff" stroke-opacity="0.5" stroke-width="0.7"/></svg>
</div></body></html>
